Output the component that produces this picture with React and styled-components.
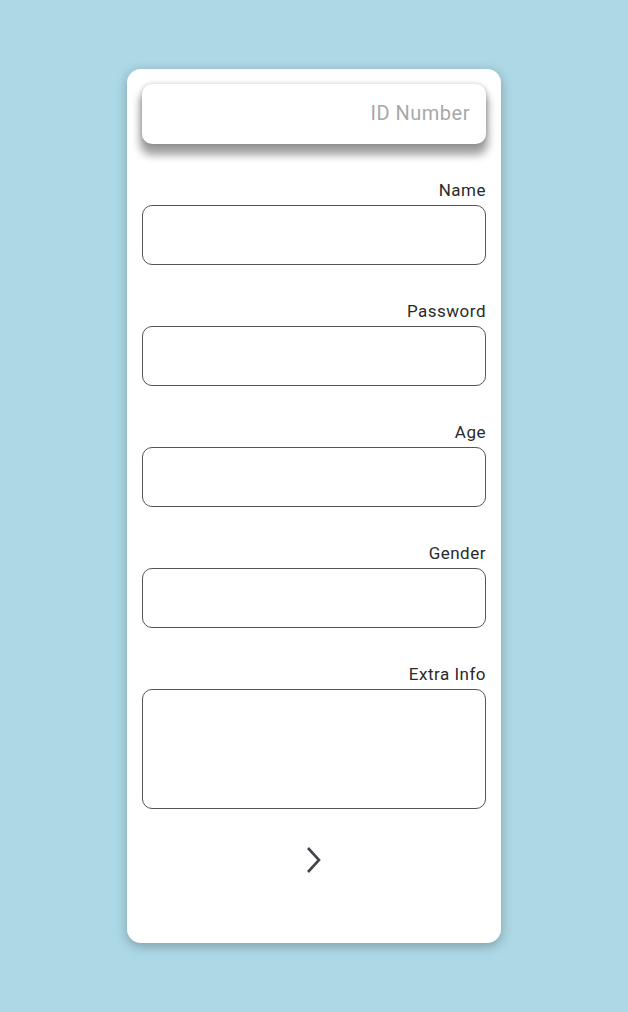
import React from "react";
import styled, { createGlobalStyle } from "styled-components";

const Global = createGlobalStyle`
  html, body { margin: 0; padding: 0; }
  body {
    background: #add8e6;
    font-family: Roboto, "Noto Sans", sans-serif;
    min-height: 1012px;
  }
`;

const Page = styled.div`
  display: flex;
  justify-content: center;
  padding-top: 69px;
`;

const Card = styled.form`
  width: 374px;
  box-sizing: border-box;
  background: #fff;
  border-radius: 14px;
  box-shadow: 0 3px 12px rgba(0, 0, 0, 0.28);
  padding: 15px 15px 59px;
  display: flex;
  flex-direction: column;
`;

const IdInput = styled.input`
  height: 60px;
  box-sizing: border-box;
  border: none;
  outline: none;
  border-radius: 10px;
  background: #fff;
  box-shadow: 0 9px 8px 2px rgba(0, 0, 0, 0.38), 0 0 5px rgba(0, 0, 0, 0.2);
  padding: 0 16px 2px;
  text-align: right;
  font-family: Roboto, sans-serif;
  font-size: 20px;
  letter-spacing: 0.5px;
  color: #333;
  &::placeholder { color: #a8a8a8; }
`;

const Field = styled.label`
  display: flex;
  flex-direction: column;
  margin-top: 37px;
`;

const LabelText = styled.span`
  align-self: flex-end;
  font-size: 17px;
  line-height: 18px;
  letter-spacing: 0.5px;
  color: #2a2a2a;
  margin-bottom: 6px;
`;

const Box = styled.input`
  height: ${(p) => p.$h || 60}px;
  box-sizing: border-box;
  border: 1px solid #555;
  border-radius: 10px;
  background: #fff;
  outline: none;
  padding: 0 12px;
  font-family: Roboto, sans-serif;
  font-size: 17px;
  resize: none;
`;

const NextButton = styled.button`
  align-self: center;
  margin-top: 27px;
  width: 48px;
  height: 48px;
  border: none;
  background: transparent;
  display: flex;
  align-items: center;
  justify-content: center;
  cursor: pointer;
  padding: 0;
`;

const fields = [
  { label: "Name" },
  { label: "Password", type: "password" },
  { label: "Age" },
  { label: "Gender" },
  { label: "Extra Info", area: true },
];

export default function App() {
  return (
    <>
      <Global />
      <Page>
        <Card onSubmit={(e) => e.preventDefault()}>
          <IdInput placeholder="ID Number" />
          {fields.map((f) => (
            <Field key={f.label}>
              <LabelText>{f.label}</LabelText>
              {f.area ? (
                <Box as="textarea" $h={120} />
              ) : (
                <Box type={f.type || "text"} />
              )}
            </Field>
          ))}
          <NextButton type="button" aria-label="Next">
            <svg width="24" height="28" viewBox="0 0 24 28">
              <path
                d="M6 2 L17 14 L6 26"
                fill="none"
                stroke="#45454c"
                strokeWidth="2.6"
                strokeLinecap="butt"
                strokeLinejoin="miter"
              />
            </svg>
          </NextButton>
        </Card>
      </Page>
    </>
  );
}
